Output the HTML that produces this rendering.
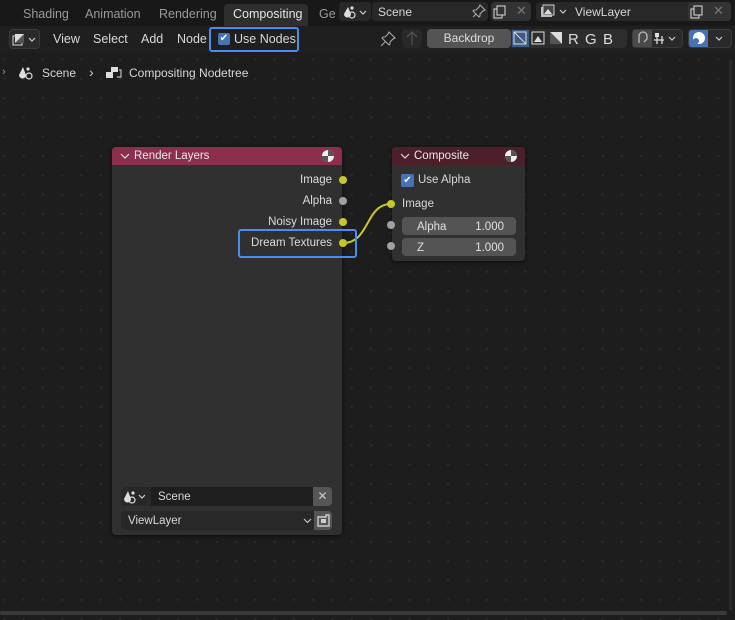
<!DOCTYPE html>
<html><head><meta charset="utf-8"><style>
*{box-sizing:border-box;margin:0;padding:0}
body{width:735px;height:620px;overflow:hidden;background:#1d1d1d;font-family:"Liberation Sans","DejaVu Sans",sans-serif;font-size:12px;color:#d8d8d8;position:relative}
.abs{position:absolute}
#grid{left:0;top:52px;width:735px;height:568px;background-color:#1d1d1d;background-image:radial-gradient(circle,#2c2c2c 1px,transparent 1.3px);background-size:19.3px 19.3px;background-position:-5.3px -2.2px}
#tabs{left:0;top:0;width:735px;height:26px;background:#181818}
.tab{position:absolute;top:4px;height:22px;line-height:21px;font-size:12.5px;color:#9a9a9a}
#hdr{left:0;top:26px;width:735px;height:26px;background:#1f1f1f}
.btn{position:absolute;background:#2d2d2d;border-radius:4px}
.menu{position:absolute;top:31px;font-size:12.5px;color:#d8d8d8}
.node{position:absolute;background:#303030;border-radius:4px;box-shadow:0 1px 4px rgba(0,0,0,.6)}
.nh{height:18px;border-radius:4px 4px 0 0;line-height:18px;padding-left:22px;font-size:11.5px;color:#e8e8e8;position:relative}
.sock{position:absolute;width:8px;height:8px;border-radius:50%}
.y{background:#c7c729}.g{background:#a1a1a1}
.lbl{position:absolute;font-size:11.5px;color:#dcdcdc;text-align:right}
.fld{position:absolute;background:#545454;border-radius:4px;height:18px;line-height:18px;font-size:11.5px;color:#e0e0e0}
</style></head><body>
<div id="grid" class="abs"></div>
<div id="tabs" class="abs">
 <div class="tab" style="left:23px">Shading</div>
 <div class="tab" style="left:85px">Animation</div>
 <div class="tab" style="left:159px">Rendering</div>
 <div class="tab" style="left:224px;width:84px;background:#2e2e2e;border-radius:4px 4px 0 0;color:#e6e6e6;padding-left:9px">Compositing</div>
 <div class="tab" style="left:319px">Ge</div>
 <div class="btn" style="left:339px;top:2px;width:32px;height:19px;background:#282828"></div>
 <svg class="abs" style="left:343px;top:5px" width="26" height="14"><path d="M5 2 L1 9 A3 3 0 0 0 8 9Z" fill="#ddd"/><circle cx="9" cy="3" r="1.6" fill="#ddd"/><circle cx="9" cy="10" r="3" fill="none" stroke="#ddd" stroke-width="1.2"/><path d="M17 6l3 3 3-3" stroke="#ccc" fill="none" stroke-width="1.2"/></svg>
 <div class="btn" style="left:372px;top:2px;width:116px;height:19px;background:#282828"></div>
 <div class="abs" style="left:378px;top:5px;font-size:12px">Scene</div>
 <svg class="abs" style="left:472px;top:4px" width="14" height="14"><path d="M8 1l5 5-2 1-3 3v2l-1 1-6-6 1-1h2l3-3z M4 10l-3 3" fill="none" stroke="#aaa" stroke-width="1.1"/></svg>
 <div class="btn" style="left:491px;top:2px;width:40px;height:19px;background:#333"></div>
 <svg class="abs" style="left:493px;top:5px" width="14" height="14"><rect x="1" y="4" width="8" height="9" fill="none" stroke="#ddd"/><rect x="4" y="1" width="8" height="9" fill="#333" stroke="#ddd"/></svg>
 <div class="abs" style="left:516px;top:3px;color:#777;font-size:13px">✕</div>
 <div class="btn" style="left:536px;top:2px;width:195px;height:19px;background:#282828"></div>
 <svg class="abs" style="left:540px;top:4px" width="30" height="15"><rect x="1" y="3" width="11" height="10" fill="#bbb"/><rect x="3" y="1" width="11" height="10" fill="#444" stroke="#ccc"/><path d="M4 10l4-5 4 5z" fill="#ddd"/><path d="M20 6l3 3 3-3" stroke="#ccc" fill="none" stroke-width="1.2"/></svg>
 <div class="abs" style="left:575px;top:5px">ViewLayer</div>
 <div class="btn" style="left:688px;top:2px;width:43px;height:19px;background:#333"></div>
 <svg class="abs" style="left:690px;top:5px" width="14" height="14"><rect x="1" y="4" width="8" height="9" fill="none" stroke="#ddd"/><rect x="4" y="1" width="8" height="9" fill="#333" stroke="#ddd"/></svg>
 <div class="abs" style="left:713px;top:3px;color:#777;font-size:13px">✕</div>
</div>
<div id="hdr" class="abs">
 <div class="btn" style="left:9px;top:3px;width:31px;height:20px;background:#2a2a2a;border:1px solid #3a3a3a"></div>
 <svg class="abs" style="left:12px;top:7px" width="26" height="14"><rect x="1" y="3" width="9" height="9" fill="none" stroke="#ddd"/><rect x="3" y="1" width="9" height="9" fill="#ddd"/><path d="M3 10L12 1V10Z" fill="#555"/><path d="M17 5l3 3 3-3" stroke="#ccc" fill="none" stroke-width="1.2"/></svg>
 <div class="abs" style="left:209px;top:1px;width:90px;height:25px;border:2px solid #4a8cf0;border-radius:3px"></div>
 <div class="abs" style="left:218px;top:7px;width:12px;height:12px;background:#4772b3;border-radius:2px;color:#fff;font-size:10px;line-height:12px;text-align:center">✔</div>
 <div class="abs" style="left:234px;top:6px;font-size:12.5px">Use Nodes</div>
 <svg class="abs" style="left:380px;top:5px" width="16" height="16"><path d="M9 1l6 6-2 1-3 3v2l-1 1-7-7 1-1h2l3-3z M5 11l-4 4" fill="none" stroke="#aaa" stroke-width="1.1"/></svg>
 <div class="btn" style="left:402px;top:3px;width:20px;height:19px;background:#282828"></div>
 <svg class="abs" style="left:405px;top:5px" width="14" height="15"><path d="M2 6l5-5 5 5M7 1v13" fill="none" stroke="#555" stroke-width="1.2"/></svg>
 <div class="btn" style="left:427px;top:3px;width:84px;height:19px;background:#545454;text-align:center;line-height:19px;color:#ddd">Backdrop</div>
 <div class="btn" style="left:511px;top:3px;width:116px;height:19px;background:#2d2d2d;border-radius:0 4px 4px 0"></div>
 <div class="abs" style="left:512px;top:4px;width:17px;height:17px;background:#3d5a86"></div>
 <svg class="abs" style="left:513px;top:5px" width="110" height="15"><rect x="1" y="1" width="12" height="12" fill="none" stroke="#ddd"/><path d="M1 1L13 13" stroke="#ddd"/><rect x="19" y="1" width="12" height="12" fill="none" stroke="#ddd"/><path d="M21 11l4-6 4 6z" fill="#ddd"/><path d="M37 1h12v12z" fill="#ddd"/><path d="M37 1v12h12z" fill="#555"/><text x="55" y="13" fill="#ddd" font-size="15" font-family="Liberation Sans">R</text><text x="72" y="13" fill="#ddd" font-size="15" font-family="Liberation Sans">G</text><text x="90" y="13" fill="#ddd" font-size="15" font-family="Liberation Sans">B</text></svg>
 <div class="btn" style="left:632px;top:3px;width:51px;height:19px;background:#2a2a2a;border:1px solid #3a3a3a"></div>
 <div class="abs" style="left:633px;top:4px;width:19px;height:17px;background:#4a4a4a"></div>
 <svg class="abs" style="left:635px;top:5px" width="46" height="15"><path d="M4 12L4 5a4 4 0 0 1 8 0v3l-3 3" fill="none" stroke="#bbb" stroke-width="1.3"/><path d="M22 2v11M19 9h10M27 5v8" stroke="#ddd" stroke-width="1.3"/><rect x="20" y="2" width="4" height="4" fill="#ddd"/><path d="M34 6l3 3 3-3" stroke="#ccc" fill="none" stroke-width="1.2"/></svg>
 <div class="btn" style="left:688px;top:3px;width:44px;height:19px;background:#2a2a2a;border:1px solid #3a3a3a"></div>
 <div class="abs" style="left:689px;top:4px;width:19px;height:17px;background:#4772b3;border-radius:3px 0 0 3px"></div>
 <svg class="abs" style="left:691px;top:5px" width="40" height="15"><circle cx="8" cy="7" r="6" fill="#fff"/><circle cx="5" cy="10" r="3" fill="#4772b3"/><path d="M25 6l3 3 3-3" stroke="#ccc" fill="none" stroke-width="1.2"/></svg>
 <div class="menu" style="left:53px;top:6px">View</div>
 <div class="menu" style="left:93px;top:6px">Select</div>
 <div class="menu" style="left:141px;top:6px">Add</div>
 <div class="menu" style="left:177px;top:6px">Node</div>
</div>
<div class="abs" style="left:2px;top:66px;color:#999;font-size:11px">›</div>
<svg class="abs" style="left:18px;top:65px" width="20" height="16"><path d="M5 2L1 10A3 3 0 0 0 8 10Z" fill="#ddd"/><circle cx="10" cy="4" r="1.6" fill="#ddd"/><circle cx="11" cy="11" r="3" fill="none" stroke="#ddd" stroke-width="1.2"/></svg>
<div class="abs" style="left:42px;top:66px;font-size:12px">Scene</div>
<div class="abs" style="left:89px;top:64px;color:#ccc;font-size:14px">›</div>
<svg class="abs" style="left:105px;top:65px" width="18" height="16"><rect x="1" y="7" width="7" height="6" fill="#ddd"/><rect x="6" y="2" width="7" height="5" fill="#ddd"/><path d="M14 5h2v7h-4" fill="none" stroke="#ddd"/></svg>
<div class="abs" style="left:129px;top:66px;font-size:12px">Compositing Nodetree</div>

<!-- Render layers node -->
<div class="node" style="left:112px;top:147px;width:230px;height:388px">
 <div class="nh" style="background:#8b2f4d">Render Layers
  <svg class="abs" style="left:8px;top:5px" width="10" height="8"><path d="M1 2l4 4 4-4" stroke="#ddd" fill="none" stroke-width="1.2"/></svg>
  <svg class="abs" style="left:209px;top:2px" width="14" height="14"><circle cx="7" cy="7" r="6" fill="#eee"/><path d="M7 7V1A6 6 0 0 1 13 7Z" fill="#555"/><path d="M7 7H1A6 6 0 0 0 7 13Z" fill="#555"/></svg></div>
 <div class="lbl" style="right:10px;top:27px">Image</div>
 <div class="lbl" style="right:10px;top:48px">Alpha</div>
 <div class="lbl" style="right:10px;top:69px">Noisy Image</div>
 <div class="lbl" style="right:10px;top:90px">Dream Textures</div>
 <div class="abs" style="left:9px;top:340px;width:30px;height:19px;background:#282828;border-radius:4px 0 0 4px"></div>
 <svg class="abs" style="left:11px;top:342px" width="26" height="16"><path d="M5 2L1 10A3 3 0 0 0 8 10Z" fill="#ddd"/><circle cx="10" cy="4" r="1.6" fill="#ddd"/><circle cx="9" cy="11" r="3" fill="none" stroke="#ddd" stroke-width="1.2"/><path d="M16 6l3 3 3-3" stroke="#ccc" fill="none" stroke-width="1.2"/></svg>
 <div class="abs" style="left:39px;top:340px;width:162px;height:19px;background:#1e1e1e;padding-left:7px;line-height:19px;font-size:11.5px;padding-top:1px">Scene</div>
 <div class="abs" style="left:201px;top:340px;width:19px;height:19px;background:#555;border-radius:0 4px 4px 0;text-align:center;line-height:19px;color:#ccc;font-size:12px">✕</div>
 <div class="abs" style="left:9px;top:364px;width:193px;height:19px;background:#282828;border-radius:4px 0 0 4px;padding-left:7px;line-height:19px;font-size:11.5px;padding-top:1px">ViewLayer
  <svg class="abs" style="left:182px;top:7px" width="9" height="6"><path d="M1 1l3.5 3.5L8 1" stroke="#ccc" fill="none" stroke-width="1.1"/></svg></div>
 <div class="abs" style="left:202px;top:364px;width:18px;height:19px;background:#555;border-radius:0 4px 4px 0"></div>
 <svg class="abs" style="left:204px;top:366px" width="15" height="15"><path d="M2 4h8v-2h3v11H2z" fill="none" stroke="#ccc" stroke-width="1.4"/><path d="M5 6h5v4H5z" fill="#ccc"/></svg>
</div>
<!-- Composite node -->
<div class="node" style="left:392px;top:147px;width:133px;height:114px">
 <div class="nh" style="background:#4d1f2a">Composite
  <svg class="abs" style="left:8px;top:5px" width="10" height="8"><path d="M1 2l4 4 4-4" stroke="#ddd" fill="none" stroke-width="1.2"/></svg>
  <svg class="abs" style="left:112px;top:2px" width="14" height="14"><circle cx="7" cy="7" r="6" fill="#eee"/><path d="M7 7V1A6 6 0 0 1 13 7Z" fill="#555"/><path d="M7 7H1A6 6 0 0 0 7 13Z" fill="#555"/></svg></div>
 <div class="abs" style="left:9px;top:27px;width:13px;height:13px;background:#4772b3;border-radius:2px;color:#fff;font-size:10px;line-height:13px;text-align:center">✔</div>
 <div class="abs" style="left:26px;top:27px;font-size:11.5px">Use Alpha</div>
 <div class="abs" style="left:10px;top:51px;font-size:11.5px">Image</div>
 <div class="fld" style="left:10px;top:70px;width:114px;padding-top:1px"><span style="position:absolute;left:15px">Alpha</span><span style="position:absolute;right:12px">1.000</span></div>
 <div class="fld" style="left:10px;top:91px;width:114px;padding-top:1px"><span style="position:absolute;left:15px">Z</span><span style="position:absolute;right:12px">1.000</span></div>
</div>
<svg class="abs" style="left:0;top:0" width="735" height="620"><path d="M343 243C370 243 365 204 391 204" stroke="#c7c729" stroke-width="2" fill="none"/></svg>
<div class="sock y" style="left:339px;top:176px"></div>
<div class="sock g" style="left:339px;top:197px"></div>
<div class="sock y" style="left:339px;top:218px"></div>
<div class="sock y" style="left:339px;top:239px"></div>
<div class="sock y" style="left:387px;top:200px"></div>
<div class="sock g" style="left:387px;top:221px"></div>
<div class="sock g" style="left:387px;top:242px"></div>
<div class="abs" style="left:238px;top:229px;width:119px;height:29px;border:2px solid #4a8cf0;border-radius:3px"></div>
<div class="abs" style="left:0;top:611px;width:727px;height:4px;background:#3a3a3a;border-radius:2px"></div>
<div class="abs" style="left:729px;top:60px;width:3px;height:550px;background:#2b2b2b;border-radius:2px"></div>
</body></html>
